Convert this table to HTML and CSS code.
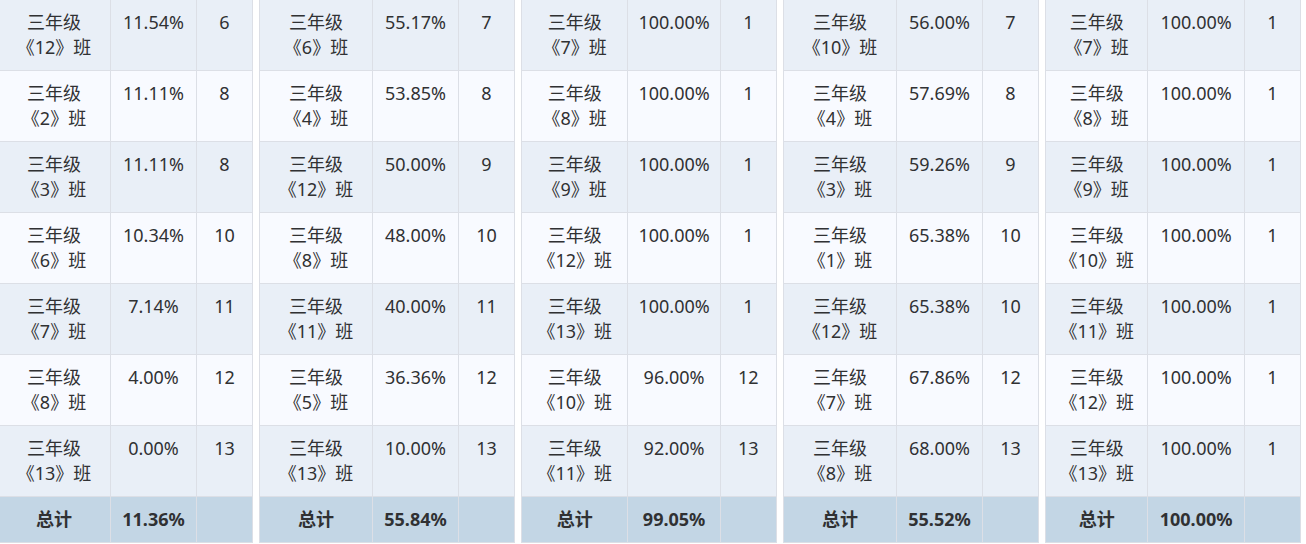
FILE: index.html
```html
<!DOCTYPE html>
<html lang="zh-CN">
<head>
    <meta charset="UTF-8">
    <meta name="viewport" content="width=device-width, initial-scale=1.0">
    <title>班级排名</title>
    <link rel="stylesheet" href="styles.css">
</head>
<body>
    <div class="board">
        <table class="rank-table cols-wide">
            <colgroup><col class="col-name"><col class="col-rate"><col class="col-rank"></colgroup>
            <tr><td>三年级<br>《12》班</td><td>11.54%</td><td>6</td></tr>
            <tr><td>三年级<br>《2》班</td><td>11.11%</td><td>8</td></tr>
            <tr><td>三年级<br>《3》班</td><td>11.11%</td><td>8</td></tr>
            <tr><td>三年级<br>《6》班</td><td>10.34%</td><td>10</td></tr>
            <tr><td>三年级<br>《7》班</td><td>7.14%</td><td>11</td></tr>
            <tr><td>三年级<br>《8》班</td><td>4.00%</td><td>12</td></tr>
            <tr><td>三年级<br>《13》班</td><td>0.00%</td><td>13</td></tr>
            <tr class="total"><td>总计</td><td>11.36%</td><td></td></tr>
        </table>

        <table class="rank-table cols-wide">
            <colgroup><col class="col-name"><col class="col-rate"><col class="col-rank"></colgroup>
            <tr><td>三年级<br>《6》班</td><td>55.17%</td><td>7</td></tr>
            <tr><td>三年级<br>《4》班</td><td>53.85%</td><td>8</td></tr>
            <tr><td>三年级<br>《12》班</td><td>50.00%</td><td>9</td></tr>
            <tr><td>三年级<br>《8》班</td><td>48.00%</td><td>10</td></tr>
            <tr><td>三年级<br>《11》班</td><td>40.00%</td><td>11</td></tr>
            <tr><td>三年级<br>《5》班</td><td>36.36%</td><td>12</td></tr>
            <tr><td>三年级<br>《13》班</td><td>10.00%</td><td>13</td></tr>
            <tr class="total"><td>总计</td><td>55.84%</td><td></td></tr>
        </table>

        <table class="rank-table cols-mid">
            <colgroup><col class="col-name"><col class="col-rate"><col class="col-rank"></colgroup>
            <tr><td>三年级<br>《7》班</td><td>100.00%</td><td>1</td></tr>
            <tr><td>三年级<br>《8》班</td><td>100.00%</td><td>1</td></tr>
            <tr><td>三年级<br>《9》班</td><td>100.00%</td><td>1</td></tr>
            <tr><td>三年级<br>《12》班</td><td>100.00%</td><td>1</td></tr>
            <tr><td>三年级<br>《13》班</td><td>100.00%</td><td>1</td></tr>
            <tr><td>三年级<br>《10》班</td><td>96.00%</td><td>12</td></tr>
            <tr><td>三年级<br>《11》班</td><td>92.00%</td><td>13</td></tr>
            <tr class="total"><td>总计</td><td>99.05%</td><td></td></tr>
        </table>

        <table class="rank-table cols-wide">
            <colgroup><col class="col-name"><col class="col-rate"><col class="col-rank"></colgroup>
            <tr><td>三年级<br>《10》班</td><td>56.00%</td><td>7</td></tr>
            <tr><td>三年级<br>《4》班</td><td>57.69%</td><td>8</td></tr>
            <tr><td>三年级<br>《3》班</td><td>59.26%</td><td>9</td></tr>
            <tr><td>三年级<br>《1》班</td><td>65.38%</td><td>10</td></tr>
            <tr><td>三年级<br>《12》班</td><td>65.38%</td><td>10</td></tr>
            <tr><td>三年级<br>《7》班</td><td>67.86%</td><td>12</td></tr>
            <tr><td>三年级<br>《8》班</td><td>68.00%</td><td>13</td></tr>
            <tr class="total"><td>总计</td><td>55.52%</td><td></td></tr>
        </table>

        <table class="rank-table cols-narrow">
            <colgroup><col class="col-name"><col class="col-rate"><col class="col-rank"></colgroup>
            <tr><td>三年级<br>《7》班</td><td>100.00%</td><td>1</td></tr>
            <tr><td>三年级<br>《8》班</td><td>100.00%</td><td>1</td></tr>
            <tr><td>三年级<br>《9》班</td><td>100.00%</td><td>1</td></tr>
            <tr><td>三年级<br>《10》班</td><td>100.00%</td><td>1</td></tr>
            <tr><td>三年级<br>《11》班</td><td>100.00%</td><td>1</td></tr>
            <tr><td>三年级<br>《12》班</td><td>100.00%</td><td>1</td></tr>
            <tr><td>三年级<br>《13》班</td><td>100.00%</td><td>1</td></tr>
            <tr class="total"><td>总计</td><td>100.00%</td><td></td></tr>
        </table>
    </div>
</body>
</html>
```

FILE: styles.css
```css
/* Global */
body {
    margin: 0;
    background-color: #FFFFFF;
    font-family: "Noto Sans", "Noto Sans CJK SC", sans-serif;
    color: #303133;
    overflow: hidden;
}

/* Board of ranking tables */
.board {
    display: flex;
    gap: 6px;
    margin: -1px 0 0 -3px;
}

.rank-table {
    flex: none;
    width: 256px;
    border-collapse: collapse;
    table-layout: fixed;
    font-size: 18px;
    line-height: 25px;
}

.rank-table td {
    padding: 10px 0;
    border: 1px solid #DCDFE6;
    text-align: center;
    vertical-align: top;
    white-space: nowrap;
}

.rank-table tr:nth-child(odd) td {
    background-color: #E9EFF7;
}

.rank-table tr:nth-child(even) td {
    background-color: #F8FAFF;
}

.rank-table tr.total td {
    background-color: #C3D6E5;
    font-weight: bold;
}

/* Column widths */
.cols-wide .col-name { width: 113px; }
.cols-wide .col-rate { width: 86px; }
.cols-wide .col-rank { width: 56px; }

.cols-mid .col-name { width: 106px; }
.cols-mid .col-rate { width: 92px; }
.cols-mid .col-rank { width: 56px; }

.cols-narrow .col-name { width: 102px; }
.cols-narrow .col-rate { width: 96px; }
.cols-narrow .col-rank { width: 56px; }
```
